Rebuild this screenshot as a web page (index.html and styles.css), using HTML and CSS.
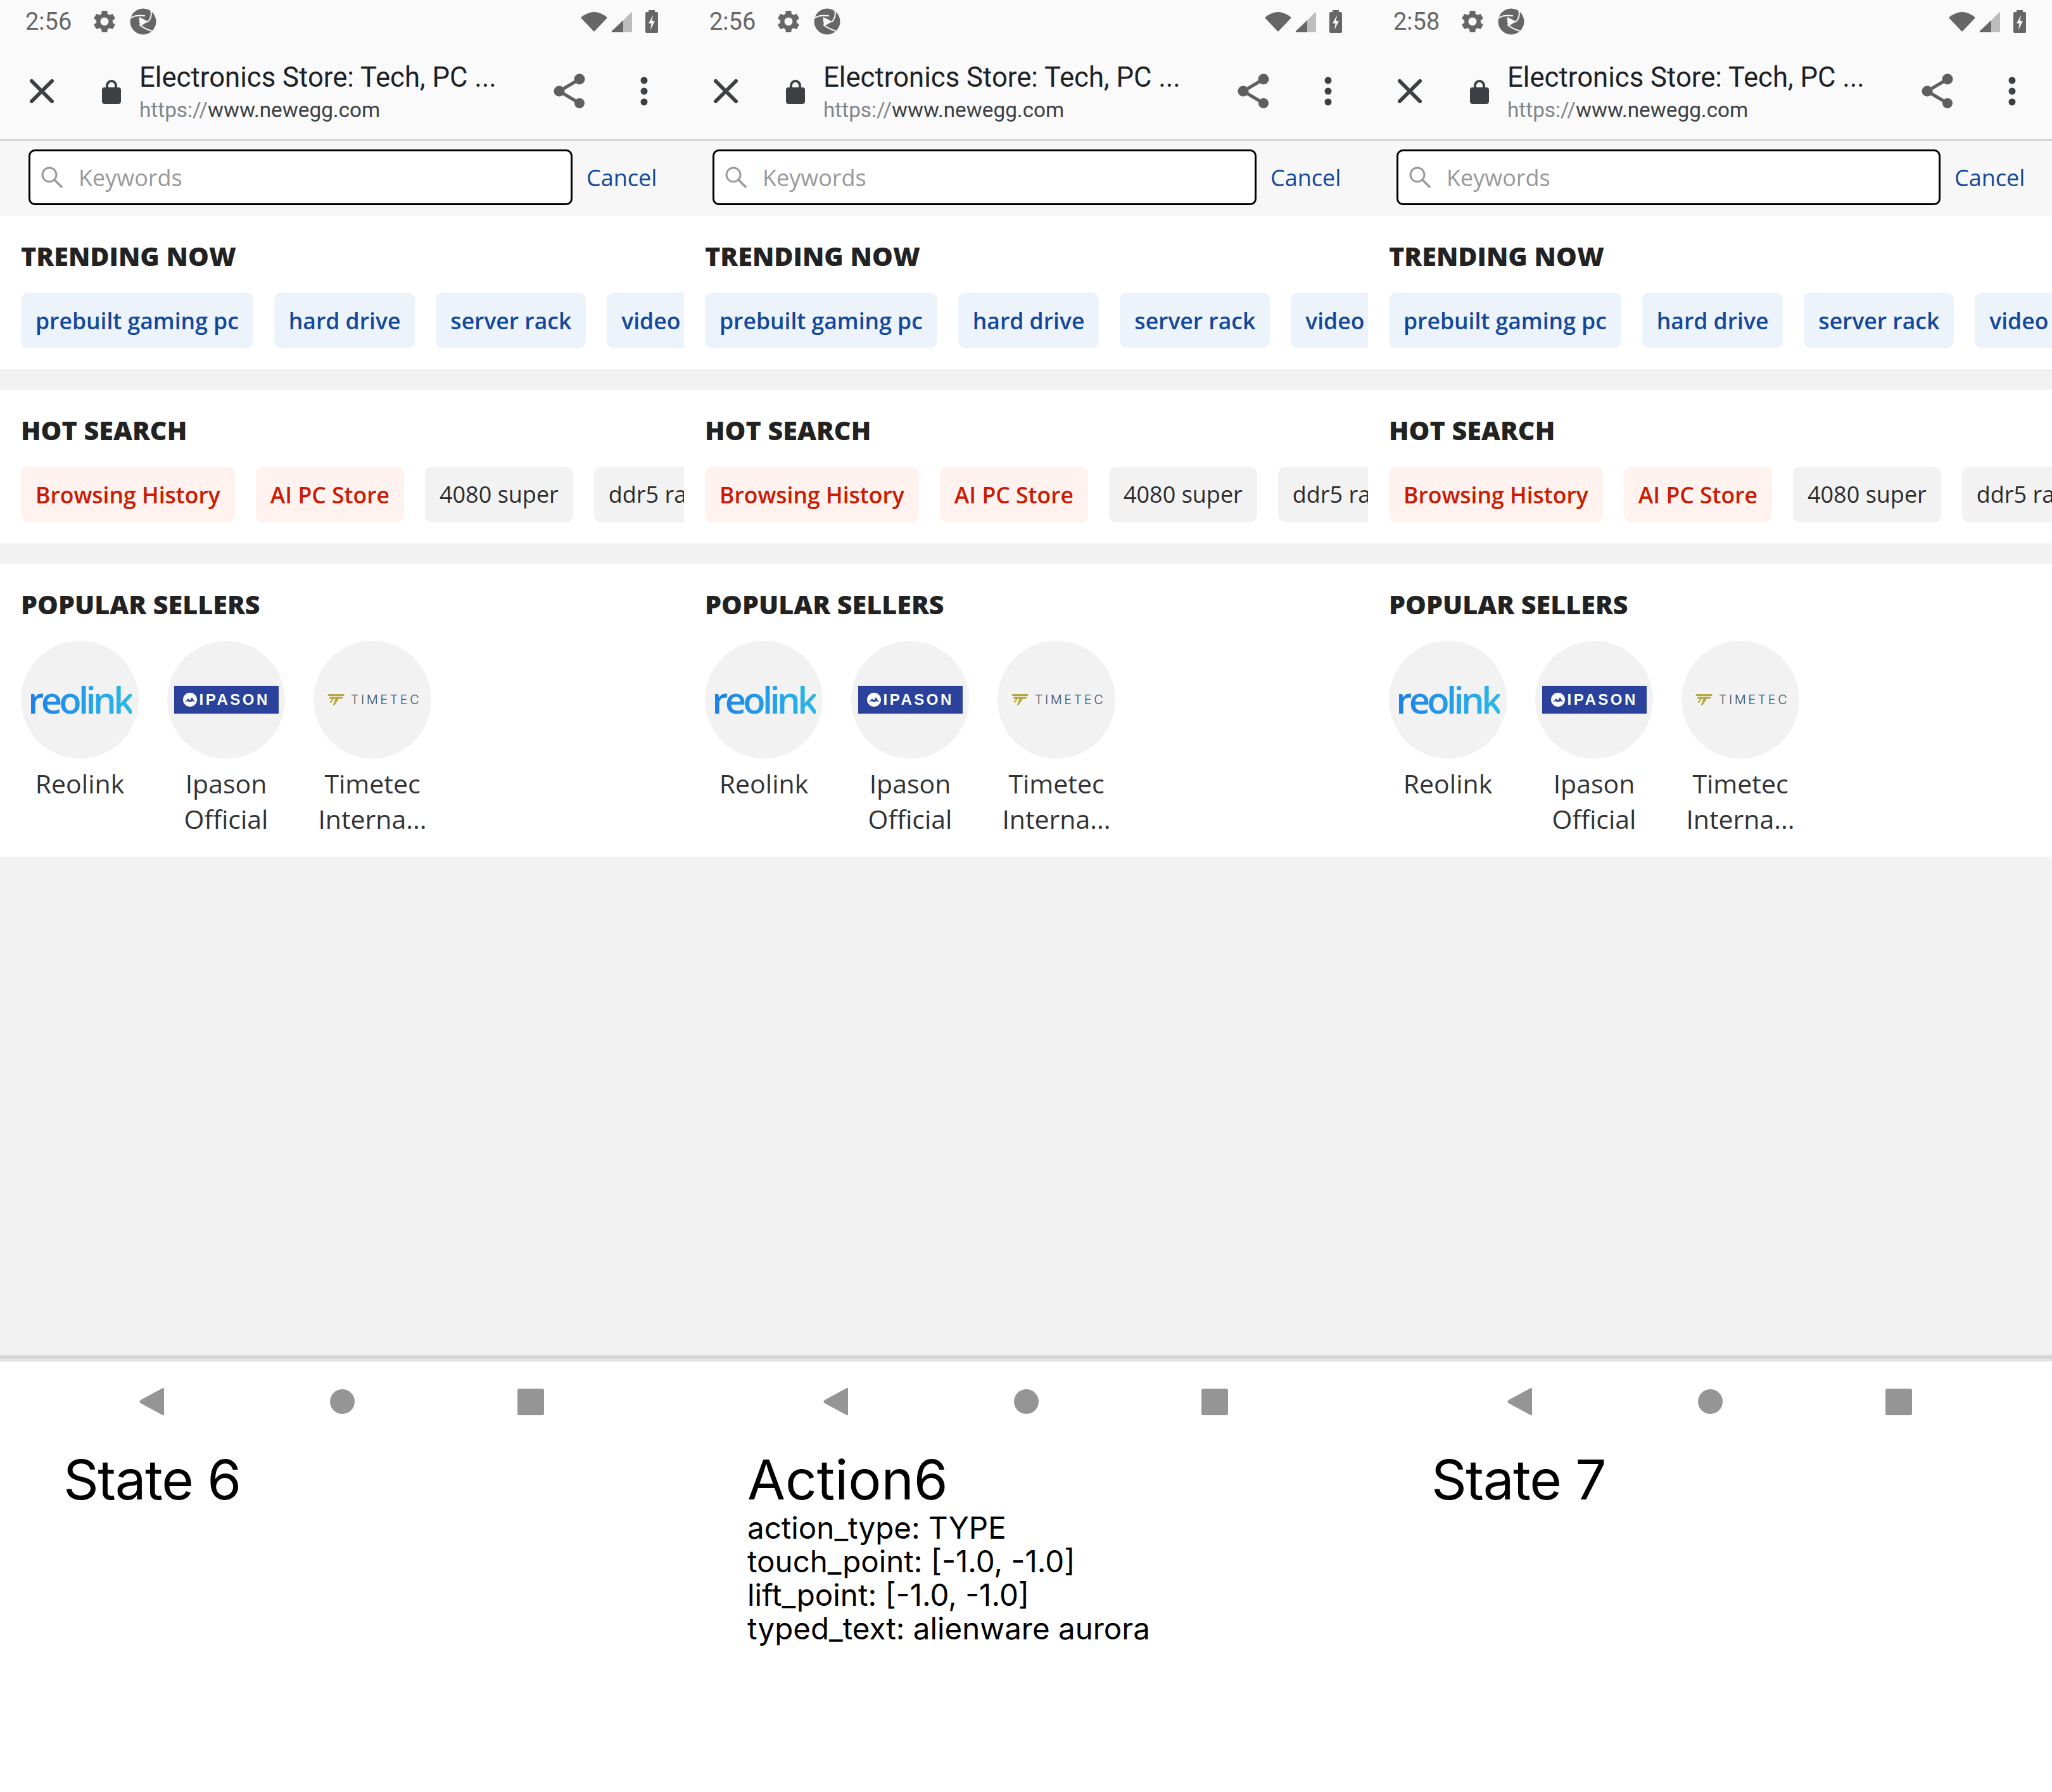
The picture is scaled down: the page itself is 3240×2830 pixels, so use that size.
FILE: index.html
```html
<!DOCTYPE html>
<html lang="en">
<head>
    <meta charset="UTF-8">
    <meta name="viewport" content="width=device-width, initial-scale=1.0">
    <title>State 6 / Action 6 / State 7</title>
    <link rel="stylesheet" href="styles.css">
</head>
<body>
    <!-- shared icons -->
    <svg class="sprites" xmlns="http://www.w3.org/2000/svg">
        <symbol id="i-gear" viewBox="2.5 2.5 19 19"><path d="M19.14 12.94c.04-.3.06-.61.06-.94 0-.32-.02-.64-.07-.94l2.03-1.58c.18-.14.23-.41.12-.61l-1.92-3.32c-.12-.22-.37-.29-.59-.22l-2.39.96c-.5-.38-1.03-.7-1.62-.94l-.36-2.54c-.04-.24-.24-.41-.48-.41h-3.84c-.24 0-.43.17-.47.41l-.36 2.54c-.59.24-1.13.57-1.62.94l-2.39-.96c-.22-.08-.47 0-.59.22L2.74 8.87c-.12.21-.08.47.12.61l2.03 1.58c-.05.3-.09.63-.09.94s.02.64.07.94l-2.03 1.58c-.18.14-.23.41-.12.61l1.92 3.32c.12.22.37.29.59.22l2.39-.96c.5.38 1.03.7 1.62.94l.36 2.54c.05.24.24.41.48.41h3.84c.24 0 .44-.17.47-.41l.36-2.54c.59-.24 1.13-.56 1.62-.94l2.39.96c.22.08.47 0 .59-.22l1.92-3.32c.12-.22.07-.47-.12-.61l-2.01-1.58zM12 15.6c-1.98 0-3.6-1.62-3.6-3.6s1.62-3.6 3.6-3.6 3.6 1.62 3.6 3.6-1.62 3.6-3.6 3.6z" fill="#666"/></symbol>
        <symbol id="i-swirl" viewBox="0 0 42 42"><circle cx="21" cy="21" r="20.5" fill="#666"/><path d="M15 14 L29 21 L17 28 Q14 21 15 14Z" fill="#fafafa"/><path d="M0 16 Q9 10 24 12 M33 2 Q36 14 28 22 M35 36 Q24 33 15 26" fill="none" stroke="#fafafa" stroke-width="2"/></symbol>
        <symbol id="i-wifi" viewBox="0 0 42 32"><path d="M1 9 Q21 -7 41 9 Q42 10 41 11 L22 31 Q21 32 20 31 L1 11 Q0 10 1 9Z" fill="#666"/></symbol>
        <symbol id="i-signal" viewBox="0 0 33 33"><path d="M19 14 L31 2 Q33 0 33 3 V33 H19Z" fill="#bdbdbd"/><path d="M19 14 V33 H2 Q0 33 1 31Z" fill="#666"/></symbol>
        <symbol id="i-battery" viewBox="0 0 20 36"><path d="M5 0 H15 V3 H18 Q20 3 20 5 V34 Q20 36 18 36 H2 Q0 36 0 34 V5 Q0 3 2 3 H5Z" fill="#666"/><path d="M12 8 L5 21 H9.5 L8 31 L15 17 H10.5Z" fill="#fafafa"/></symbol>
        <symbol id="i-close" viewBox="0 0 38 38"><path d="M3 3 L35 35 M35 3 L3 35" fill="none" stroke="#3c4043" stroke-width="6" stroke-linecap="round"/></symbol>
        <symbol id="i-lock" viewBox="0 0 30 39"><path d="M8 14 V10 a7 7 0 0 1 14 0 V14" fill="none" stroke="#3c4043" stroke-width="4"/><rect y="13" width="30" height="26" rx="4" fill="#3c4043"/></symbol>
        <symbol id="i-share" viewBox="0 0 50 56"><path d="M41 9 L9 28 L41 47" fill="none" stroke="#5f5f5f" stroke-width="5"/><circle cx="41" cy="9" r="8.500" fill="#5f5f5f"/><circle cx="9" cy="28" r="8.500" fill="#5f5f5f"/><circle cx="41" cy="47" r="8" fill="#5f5f5f"/></symbol>
        <symbol id="i-more" viewBox="0 0 12 46"><circle cx="6" cy="6" r="5.500" fill="#3c4043"/><circle cx="6" cy="23" r="5.500" fill="#3c4043"/><circle cx="6" cy="40" r="5.500" fill="#3c4043"/></symbol>
        <symbol id="i-search" viewBox="0 0 37 34"><circle cx="14" cy="13" r="11" fill="none" stroke="#9a9a9a" stroke-width="3"/><path d="M22 21 L34 33" fill="none" stroke="#9a9a9a" stroke-width="3.500"/></symbol>
        <symbol id="i-back" viewBox="0 0 39 45"><path d="M37 1 Q39 0 39 3 V42 Q39 45 37 44 L2 25 Q-1 22.500 2 20Z" fill="#959595"/></symbol>
        <symbol id="i-tt" viewBox="0 0 29 18"><path d="M4 0 H29 L27.500 3 H2Z M6 4.500 H26.500 L25 7.500 H20 L13 18 H10.500 L14.500 7.500 H12 L7.500 14 H5.500 L9 7.500 H4.500Z" fill="#b5a83a"/></symbol>
        <symbol id="i-peak" viewBox="0 0 22 22"><circle cx="11" cy="11" r="11" fill="#fff"/><path d="M3 15 L8 9 L11 12 L14 7 L19 15 L15 13 L11 15 L7 13Z" fill="#2a429b"/></symbol>
    </svg>

    <main class="board">

        <section class="panel">
            <div class="status-bar">
                <span class="clock">2:56</span>
                <svg class="ic-gear"><use href="#i-gear"/></svg>
                <svg class="ic-swirl"><use href="#i-swirl"/></svg>
                <svg class="ic-wifi"><use href="#i-wifi"/></svg>
                <svg class="ic-signal"><use href="#i-signal"/></svg>
                <svg class="ic-battery"><use href="#i-battery"/></svg>
            </div>
            <div class="toolbar">
                <svg class="ic-close"><use href="#i-close"/></svg>
                <svg class="ic-lock"><use href="#i-lock"/></svg>
                <div class="page-info">
                    <div class="page-title">Electronics Store: Tech, PC ...</div>
                    <div class="page-url"><span>https://</span>www.newegg.com</div>
                </div>
                <svg class="ic-share"><use href="#i-share"/></svg>
                <svg class="ic-more"><use href="#i-more"/></svg>
            </div>
            <div class="search-row">
                <div class="search-box">
                    <svg class="ic-search"><use href="#i-search"/></svg>
                    <span>Keywords</span>
                </div>
                <a class="cancel">Cancel</a>
            </div>
            <div class="block">
                <h2>TRENDING NOW</h2>
                <div class="chips">
                    <span class="chip blue">prebuilt gaming pc</span>
                    <span class="chip blue">hard drive</span>
                    <span class="chip blue">server rack</span>
                    <span class="chip blue">video</span>
                </div>
            </div>
            <div class="block">
                <h2>HOT SEARCH</h2>
                <div class="chips">
                    <span class="chip red">Browsing History</span>
                    <span class="chip red">AI PC Store</span>
                    <span class="chip">4080 super</span>
                    <span class="chip">ddr5 ram</span>
                </div>
            </div>
            <div class="block sellers-block">
                <h2>POPULAR SELLERS</h2>
                <div class="sellers">
                    <div class="seller">
                        <div class="seller-logo"><span class="logo-reolink">reolink</span></div>
                        <div class="seller-name">Reolink</div>
                    </div>
                    <div class="seller">
                        <div class="seller-logo">
                            <div class="logo-ipason"><svg class="ic-peak"><use href="#i-peak"/></svg><span>IPASON</span></div>
                        </div>
                        <div class="seller-name">Ipason Official</div>
                    </div>
                    <div class="seller">
                        <div class="seller-logo">
                            <div class="logo-timetec"><svg class="ic-tt"><use href="#i-tt"/></svg><span>TIMETEC</span></div>
                        </div>
                        <div class="seller-name">Timetec Interna...</div>
                    </div>
                </div>
            </div>
            <div class="blank"></div>
            <div class="nav-bar">
                <svg class="ic-back"><use href="#i-back"/></svg>
                <span class="nav-home"></span>
                <span class="nav-recent"></span>
            </div>
            <div class="caption">
                <div class="caption-title state">State 6</div>
            </div>
        </section>

        <section class="panel">
            <div class="status-bar">
                <span class="clock">2:56</span>
                <svg class="ic-gear"><use href="#i-gear"/></svg>
                <svg class="ic-swirl"><use href="#i-swirl"/></svg>
                <svg class="ic-wifi"><use href="#i-wifi"/></svg>
                <svg class="ic-signal"><use href="#i-signal"/></svg>
                <svg class="ic-battery"><use href="#i-battery"/></svg>
            </div>
            <div class="toolbar">
                <svg class="ic-close"><use href="#i-close"/></svg>
                <svg class="ic-lock"><use href="#i-lock"/></svg>
                <div class="page-info">
                    <div class="page-title">Electronics Store: Tech, PC ...</div>
                    <div class="page-url"><span>https://</span>www.newegg.com</div>
                </div>
                <svg class="ic-share"><use href="#i-share"/></svg>
                <svg class="ic-more"><use href="#i-more"/></svg>
            </div>
            <div class="search-row">
                <div class="search-box">
                    <svg class="ic-search"><use href="#i-search"/></svg>
                    <span>Keywords</span>
                </div>
                <a class="cancel">Cancel</a>
            </div>
            <div class="block">
                <h2>TRENDING NOW</h2>
                <div class="chips">
                    <span class="chip blue">prebuilt gaming pc</span>
                    <span class="chip blue">hard drive</span>
                    <span class="chip blue">server rack</span>
                    <span class="chip blue">video</span>
                </div>
            </div>
            <div class="block">
                <h2>HOT SEARCH</h2>
                <div class="chips">
                    <span class="chip red">Browsing History</span>
                    <span class="chip red">AI PC Store</span>
                    <span class="chip">4080 super</span>
                    <span class="chip">ddr5 ram</span>
                </div>
            </div>
            <div class="block sellers-block">
                <h2>POPULAR SELLERS</h2>
                <div class="sellers">
                    <div class="seller">
                        <div class="seller-logo"><span class="logo-reolink">reolink</span></div>
                        <div class="seller-name">Reolink</div>
                    </div>
                    <div class="seller">
                        <div class="seller-logo">
                            <div class="logo-ipason"><svg class="ic-peak"><use href="#i-peak"/></svg><span>IPASON</span></div>
                        </div>
                        <div class="seller-name">Ipason Official</div>
                    </div>
                    <div class="seller">
                        <div class="seller-logo">
                            <div class="logo-timetec"><svg class="ic-tt"><use href="#i-tt"/></svg><span>TIMETEC</span></div>
                        </div>
                        <div class="seller-name">Timetec Interna...</div>
                    </div>
                </div>
            </div>
            <div class="blank"></div>
            <div class="nav-bar">
                <svg class="ic-back"><use href="#i-back"/></svg>
                <span class="nav-home"></span>
                <span class="nav-recent"></span>
            </div>
            <div class="caption">
                <div class="caption-title">Action6</div>
                <div class="caption-line">action_type: TYPE</div>
                <div class="caption-line">touch_point: [-1.0, -1.0]</div>
                <div class="caption-line">lift_point: [-1.0, -1.0]</div>
                <div class="caption-line">typed_text: alienware aurora</div>
            </div>
        </section>

        <section class="panel">
            <div class="status-bar">
                <span class="clock">2:58</span>
                <svg class="ic-gear"><use href="#i-gear"/></svg>
                <svg class="ic-swirl"><use href="#i-swirl"/></svg>
                <svg class="ic-wifi"><use href="#i-wifi"/></svg>
                <svg class="ic-signal"><use href="#i-signal"/></svg>
                <svg class="ic-battery"><use href="#i-battery"/></svg>
            </div>
            <div class="toolbar">
                <svg class="ic-close"><use href="#i-close"/></svg>
                <svg class="ic-lock"><use href="#i-lock"/></svg>
                <div class="page-info">
                    <div class="page-title">Electronics Store: Tech, PC ...</div>
                    <div class="page-url"><span>https://</span>www.newegg.com</div>
                </div>
                <svg class="ic-share"><use href="#i-share"/></svg>
                <svg class="ic-more"><use href="#i-more"/></svg>
            </div>
            <div class="search-row">
                <div class="search-box">
                    <svg class="ic-search"><use href="#i-search"/></svg>
                    <span>Keywords</span>
                </div>
                <a class="cancel">Cancel</a>
            </div>
            <div class="block">
                <h2>TRENDING NOW</h2>
                <div class="chips">
                    <span class="chip blue">prebuilt gaming pc</span>
                    <span class="chip blue">hard drive</span>
                    <span class="chip blue">server rack</span>
                    <span class="chip blue">video</span>
                </div>
            </div>
            <div class="block">
                <h2>HOT SEARCH</h2>
                <div class="chips">
                    <span class="chip red">Browsing History</span>
                    <span class="chip red">AI PC Store</span>
                    <span class="chip">4080 super</span>
                    <span class="chip">ddr5 ram</span>
                </div>
            </div>
            <div class="block sellers-block">
                <h2>POPULAR SELLERS</h2>
                <div class="sellers">
                    <div class="seller">
                        <div class="seller-logo"><span class="logo-reolink">reolink</span></div>
                        <div class="seller-name">Reolink</div>
                    </div>
                    <div class="seller">
                        <div class="seller-logo">
                            <div class="logo-ipason"><svg class="ic-peak"><use href="#i-peak"/></svg><span>IPASON</span></div>
                        </div>
                        <div class="seller-name">Ipason Official</div>
                    </div>
                    <div class="seller">
                        <div class="seller-logo">
                            <div class="logo-timetec"><svg class="ic-tt"><use href="#i-tt"/></svg><span>TIMETEC</span></div>
                        </div>
                        <div class="seller-name">Timetec Interna...</div>
                    </div>
                </div>
            </div>
            <div class="blank"></div>
            <div class="nav-bar">
                <svg class="ic-back"><use href="#i-back"/></svg>
                <span class="nav-home"></span>
                <span class="nav-recent"></span>
            </div>
            <div class="caption">
                <div class="caption-title state">State 7</div>
            </div>
        </section>

    </main>
</body>
</html>
```

FILE: styles.css
```css
body {
    margin: 0;
    padding: 0;
    background-color: #fff;
    font-family: "Open Sans", sans-serif;
    overflow: hidden;
}

.sprites {
    display: none;
}

.board {
    display: flex;
    width: 3240px;
    height: 2830px;
}

.panel {
    width: 1080px;
    flex-shrink: 0;
    overflow: hidden;
    display: flex;
    flex-direction: column;
    background-color: #f2f2f2;
}

/* status bar */
.status-bar {
    height: 68px;
    padding: 0 41px 0 40px;
    display: flex;
    align-items: center;
    background-color: #fafafa;
}

.clock {
    font-family: Roboto, sans-serif;
    font-size: 38px;
    color: #666;
    width: 73px;
}

.ic-gear { width: 34px; height: 34px; margin-left: 35px; }
.ic-swirl { width: 42px; height: 42px; margin-left: 23px; }
.ic-wifi { width: 42px; height: 32px; margin-left: auto; }
.ic-signal { width: 33px; height: 33px; margin-left: 6px; }
.ic-battery { width: 20px; height: 36px; margin-left: 21px; }

/* browser toolbar */
.toolbar {
    height: 152px;
    display: flex;
    align-items: center;
    background-color: #fafafa;
    border-bottom: 2px solid #c4c4c4;
}

.ic-close { width: 38px; height: 38px; margin-left: 47px; flex-shrink: 0; }
.ic-lock { width: 30px; height: 39px; margin-left: 76px; flex-shrink: 0; }
.ic-share { width: 50px; height: 56px; margin-left: 91px; flex-shrink: 0; }
.ic-more { width: 12px; height: 46px; margin-left: 87px; flex-shrink: 0; }

.page-info {
    width: 563px;
    margin-left: 29px;
    padding-top: 9px;
    font-family: Roboto, sans-serif;
    white-space: nowrap;
}

.page-title {
    font-size: 43.7px;
    line-height: 50px;
    color: #202124;
}

.page-url {
    font-size: 33.3px;
    line-height: 53px;
    color: #3c4043;
}

.page-url span {
    color: #80868b;
}

/* search row */
.search-row {
    height: 119px;
    box-sizing: border-box;
    padding: 0 0 3px 45px;
    display: flex;
    align-items: center;
    background-color: #f7f7f7;
}

.search-box {
    width: 859px;
    height: 88px;
    box-sizing: border-box;
    border: 3px solid #000;
    border-radius: 10px;
    background-color: #fff;
    display: flex;
    align-items: center;
    padding-left: 16px;
    font-size: 36px;
    color: #999;
}

.ic-search { width: 37px; height: 34px; margin-right: 23px; }

.cancel {
    margin-left: 22px;
    font-size: 36px;
    color: #12489c;
}

/* content blocks */
.block {
    padding: 37px 0 33px 33px;
    margin-bottom: 33px;
    background-color: #fff;
}

.block h2 {
    margin: 0 0 32px;
    font-size: 41.25px;
    line-height: 52px;
    font-weight: 800;
    color: #222;
}

.chips {
    display: flex;
    gap: 33px;
    white-space: nowrap;
}

.chip {
    height: 88px;
    line-height: 88px;
    padding: 0 23px;
    border-radius: 12px;
    font-size: 36px;
    flex-shrink: 0;
    background-color: #f2f2f2;
    color: #2b2b2b;
}

.chip.blue {
    background-color: #edf3fa;
    color: #12489c;
    font-size: 35.5px;
    font-weight: 600;
}

.chip.red {
    background-color: #fff2ef;
    color: #cc1a00;
    font-size: 35.5px;
    font-weight: 600;
}

/* popular sellers */
.sellers-block {
    margin-bottom: 0;
    padding-bottom: 32px;
}

.sellers {
    display: flex;
    gap: 45px;
}

.seller {
    width: 186px;
}

.seller-logo {
    width: 186px;
    height: 186px;
    border-radius: 50%;
    background-color: #f2f2f2;
    display: flex;
    align-items: center;
    justify-content: center;
}

.seller-name {
    margin-top: 11px;
    font-size: 41px;
    line-height: 56px;
    text-align: center;
    color: #333;
}

.logo-reolink {
    font-size: 58px;
    font-weight: 600;
    letter-spacing: -4.7px;
    line-height: 1;
    background: linear-gradient(90deg, #1d7fe8, #2ab8e8);
    -webkit-background-clip: text;
    background-clip: text;
    color: transparent;
}

.logo-ipason {
    width: 165px;
    height: 44px;
    display: flex;
    align-items: center;
    padding-left: 14px;
    box-sizing: border-box;
    background-color: #2a429b;
    font-family: "Liberation Sans", sans-serif;
    font-weight: bold;
    font-size: 24px;
    letter-spacing: 3.5px;
    color: #fff;
}

.ic-peak { width: 22px; height: 22px; margin-right: 4px; }

.logo-timetec {
    display: flex;
    align-items: center;
    padding-left: 4px;
    font-family: Inter, sans-serif;
    font-weight: 300;
    font-size: 20px;
    letter-spacing: 3.5px;
    color: #3a5468;
}

.ic-tt { width: 29px; height: 18px; margin-right: 10px; }

/* empty area + android nav */
.blank {
    flex: 0 0 792px;
    background: linear-gradient(to bottom, #f2f2f2 calc(100% - 7px), #c6c6c6);
}

.nav-bar {
    height: 127px;
    display: flex;
    align-items: center;
    background-color: #fff;
    border-top: 5px solid #e2e2e2;
}

.ic-back { width: 39px; height: 45px; margin-left: 220px; }

.nav-home {
    width: 39px;
    height: 39px;
    margin-left: 262px;
    border-radius: 50%;
    background-color: #959595;
}

.nav-recent {
    width: 42px;
    height: 42px;
    margin-left: 257px;
    border-radius: 3px;
    background-color: #959595;
}

/* caption */
.caption {
    flex: 1;
    padding-left: 100px;
    background-color: #fff;
    font-family: Inter, sans-serif;
    color: #000;
}

.caption-title {
    font-size: 87px;
    line-height: 98px;
    margin-top: 10.5px;
}

.caption-title.state {
    letter-spacing: -1.5px;
}

.caption-line {
    font-size: 47.5px;
    line-height: 53px;
}
```
